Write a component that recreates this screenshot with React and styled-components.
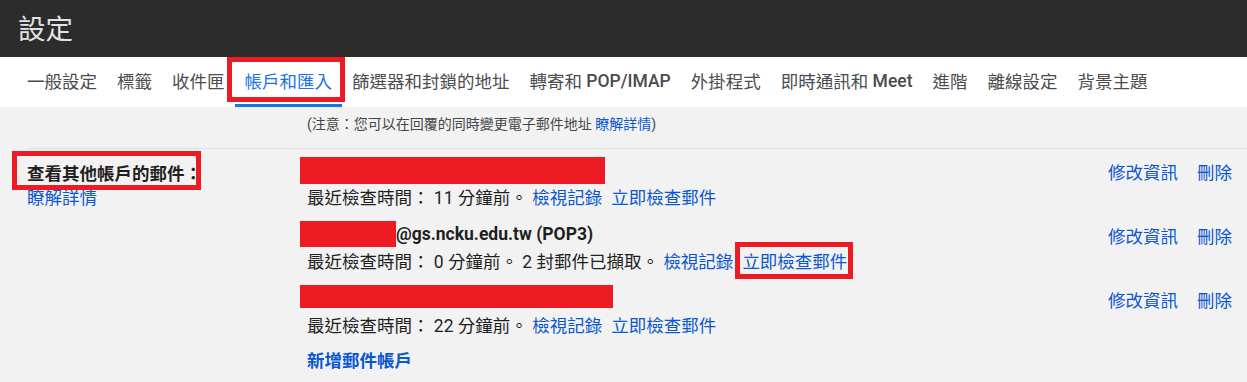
import React from "react";
import styled, { createGlobalStyle } from "styled-components";

const GlobalStyle = createGlobalStyle`
  html, body { margin: 0; padding: 0; background: #f2f2f2; }
  body { font-family: Roboto, "Noto Sans CJK TC", "Noto Sans", sans-serif; -webkit-font-smoothing: antialiased; }
  * { box-sizing: border-box; }
`;

const RED = "#ed1c24";
const LINK = "#0b57d0";

const Page = styled.div`
  width: 1247px;
  height: 382px;
  overflow: hidden;
  display: flex;
  flex-direction: column;
  background: #f2f2f2;
`;

const Header = styled.header`
  height: 57px;
  flex: none;
  background: #2c2c2c;
  color: #e3e3e3;
  display: flex;
  align-items: center;
  padding: 0 0 3px 18px;
  font-size: 27.5px;
  font-weight: 400;
`;

const TabBar = styled.nav`
  height: 50px;
  flex: none;
  background: #fff;
  display: flex;
  padding-left: 17px;
`;

const Tab = styled.div`
  position: relative;
  height: 50px;
  padding: 0 10px;
  display: flex;
  align-items: center;
  font-size: 17.5px;
  white-space: pre;
  color: ${(p) => (p.$active ? "#1a73e8" : "#4a4c4e")};
  border-bottom: 3px solid ${(p) => (p.$active ? "#1a73e8" : "transparent")};
`;

const Latin = styled.span`
  font-weight: 500;
`;

const Marked = styled.span`
  position: relative;
  display: ${(p) => (p.$block ? "flex" : "inline-block")};
  &::after {
    content: "";
    position: absolute;
    left: ${(p) => p.$l}px;
    right: ${(p) => p.$r}px;
    top: ${(p) => p.$t}px;
    bottom: ${(p) => p.$b}px;
    border: 5px solid ${RED};
    pointer-events: none;
  }
`;

const Content = styled.main`
  flex: 1;
  padding-left: 27px;
`;

const NoteRow = styled.div`
  height: 42px;
  padding: 7px 0 0 280px;
  border-bottom: 1px solid #e1e1e1;
  font-size: 14px;
  line-height: 20px;
  color: #444746;
`;

const Link = styled.a`
  color: ${LINK};
  text-decoration: none;
  cursor: pointer;
  font-weight: ${(p) => (p.$bold ? 700 : 400)};
  margin-right: ${(p) => p.$gap || 0}px;
`;

const Section = styled.section`
  display: grid;
  grid-template-columns: 280px 1fr;
  padding: 8px 15px 0 0;
  font-size: 17.5px;
  color: #1f1f1f;
`;

const LeftCol = styled.div`
  padding-top: 5px;
  display: flex;
  flex-direction: column;
  align-items: flex-start;
  line-height: 24px;
`;

const Label = styled.span`
  font-weight: 700;
  color: #1f1f1f;
`;

const Accounts = styled.div`
  display: flex;
  flex-direction: column;
`;

const AccountRow = styled.div`
  display: flex;
  justify-content: space-between;
  & + & {
    margin-top: 12px;
  }
`;

const Info = styled.div`
  display: flex;
  flex-direction: column;
  line-height: 26px;
`;

const Line = styled.div`
  height: 26px;
  display: flex;
  align-items: flex-start;
  white-space: pre;
  padding-top: ${(p) => p.$shift || 0}px;
`;

const Redact = styled.span`
  display: inline-block;
  flex: none;
  width: ${(p) => p.$w}px;
  height: ${(p) => p.$h}px;
  margin-left: -7px;
  background: ${RED};
`;

const Address = styled.span`
  font-weight: 700;
  color: #1f1f1f;
`;

const Actions = styled.div`
  display: flex;
  gap: 19px;
  padding-top: 3px;
  line-height: 26px;
`;

const AddLink = styled(Link)`
  margin-top: 11px;
  line-height: 26px;
  font-weight: 700;
`;

const tabs = [
  ["一般設定"],
  ["標籤"],
  ["收件匣"],
  ["帳戶和匯入", null, true],
  ["篩選器和封鎖的地址"],
  ["轉寄和 ", "POP/IMAP"],
  ["外掛程式"],
  ["即時通訊和 ", "Meet"],
  ["進階"],
  ["離線設定"],
  ["背景主題"],
];

function Row({ redact, address, status, marked }) {
  return (
    <AccountRow>
      <Info>
        <Line>
          <Redact $w={redact.w} $h={redact.h} />
          {address && <Address>{address}</Address>}
        </Line>
        <Line $shift={2}>
          <span>{status}</span>
          <Link $gap={9}>檢視記錄</Link>
          {marked ? (
            <Marked $l={-7} $r={-6} $t={-7} $b={-4}>
              <Link>立即檢查郵件</Link>
            </Marked>
          ) : (
            <Link>立即檢查郵件</Link>
          )}
        </Line>
      </Info>
      <Actions>
        <Link>修改資訊</Link>
        <Link>刪除</Link>
      </Actions>
    </AccountRow>
  );
}

export default function App() {
  return (
    <Page>
      <GlobalStyle />
      <Header>設定</Header>
      <TabBar>
        {tabs.map(([cjk, latin, active]) =>
          active ? (
            <Marked key={cjk} $block $l={-8} $r={-3} $t={0} $b={5}>
              <Tab $active>{cjk}</Tab>
            </Marked>
          ) : (
            <Tab key={cjk}>
              {cjk}
              {latin && <Latin>{latin}</Latin>}
            </Tab>
          )
        )}
      </TabBar>
      <Content>
        <NoteRow>
          (注意：您可以在回覆的同時變更電子郵件地址 <Link>瞭解詳情</Link>)
        </NoteRow>
        <Section>
          <LeftCol>
            <Marked $l={-15} $r={1} $t={-11} $b={-4}>
              <Label>查看其他帳戶的郵件：</Label>
            </Marked>
            <Link>瞭解詳情</Link>
          </LeftCol>
          <Accounts>
            <Row redact={{ w: 305, h: 27 }} status="最近檢查時間： 11 分鐘前。 " />
            <Row
              redact={{ w: 96, h: 26 }}
              address="@gs.ncku.edu.tw (POP3)"
              status="最近檢查時間： 0 分鐘前。 2 封郵件已擷取。 "
              marked
            />
            <Row redact={{ w: 313, h: 23 }} status="最近檢查時間： 22 分鐘前。 " />
            <AddLink>新增郵件帳戶</AddLink>
          </Accounts>
        </Section>
      </Content>
    </Page>
  );
}
